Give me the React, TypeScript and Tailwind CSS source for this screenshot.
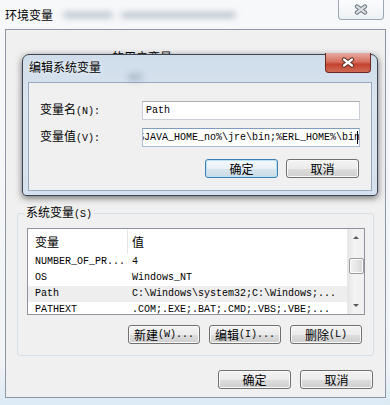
import clsx from 'clsx';

const cjk = "font-['Noto_Sans_CJK_SC',sans-serif]";
const mono = "font-['Liberation_Mono','Noto_Sans_CJK_SC',monospace]";

// ascii part of a label, in the narrow half-width look
function Key({ k }: { k: string }) {
  return <span className={clsx(mono, 'text-[10px]')}>{k}</span>;
}

interface WinButtonProps {
  children: React.ReactNode;
  wide?: boolean;
  isDefault?: boolean;
}

function WinButton({ children, wide, isDefault }: WinButtonProps) {
  return (
    <button
      className={clsx(
        'flex h-[19px] items-center justify-center rounded-[3px] border text-[12px] leading-[14px] text-black',
        wide ? 'w-[73px]' : 'w-[72px]',
        isDefault
          ? 'border-[#3c7fb1] bg-[linear-gradient(180deg,#f3f8fb_0%,#e9f1f7_50%,#d8e5ee_51%,#cbdbe6_100%)] shadow-[inset_0_0_0_1px_#b9e2f9]'
          : 'border-[#707070] bg-[linear-gradient(180deg,#f3f3f3_0%,#ebebeb_50%,#dddddd_51%,#cfcfcf_100%)] shadow-[inset_0_0_0_1px_#fafafa]'
      )}
    >
      {children}
    </button>
  );
}

function CloseGlyph({ red }: { red?: boolean }) {
  return (
    <svg width="14" height="11" viewBox="0 0 14 11">
      <path
        d="M3 2.5 L11 8.5 M11 2.5 L3 8.5"
        stroke={red ? '#5a2a24' : '#6a737d'}
        strokeWidth="4.2"
        strokeLinecap="round"
      />
      <path
        d="M3 2.5 L11 8.5 M11 2.5 L3 8.5"
        stroke={red ? '#ffffff' : '#d9dde2'}
        strokeWidth="2.2"
        strokeLinecap="round"
      />
    </svg>
  );
}

const rows = [
  { name: 'NUMBER_OF_PR...', value: '4' },
  { name: 'OS', value: 'Windows_NT' },
  { name: 'Path', value: 'C:\\Windows\\system32;C:\\Windows;...', selected: true },
  { name: 'PATHEXT', value: '.COM;.EXE;.BAT;.CMD;.VBS;.VBE;...' },
];

function VariableList() {
  return (
    <div className="flex h-[87px] w-[338px] overflow-hidden border border-[#8e949c] bg-white">
      <div className="flex-1">
        <div className="flex h-[25px] items-center text-[12px] leading-[14px] text-black">
          <div className="flex h-full w-[100px] items-center border-r border-[#e3e6ea] pl-[7px]">变量</div>
          <div className="pl-[4px]">值</div>
        </div>
        {rows.map((row) => (
          <div
            key={row.name}
            className={clsx(
              'flex h-[16px] items-center text-[10px] leading-[12px] text-black',
              mono,
              row.selected && 'bg-[#eeeeee]'
            )}
          >
            <div className="w-[100px] pl-[7px] whitespace-nowrap">{row.name}</div>
            <div className="pl-[4px] whitespace-nowrap">{row.value}</div>
          </div>
        ))}
      </div>

      {/* scrollbar */}
      <div className="flex w-[17px] flex-col border-l border-[#e8e8e8] bg-[linear-gradient(90deg,#e6e6e6,#f4f4f4_40%,#f0f0f0)]">
        <div className="flex h-[17px] items-center justify-center">
          <div className="h-0 w-0 border-x-[3px] border-b-[3px] border-x-transparent border-b-[#5a5a5a]" />
        </div>
        <div className="mx-auto mt-[12px] h-[16px] w-[15px] rounded-[2px] border border-[#9b9b9b] bg-[linear-gradient(90deg,#f2f2f2,#e6e6e6_50%,#d6d6d6)] shadow-[inset_0_0_0_1px_#fbfbfb]" />
        <div className="mt-auto flex h-[17px] items-center justify-center">
          <div className="h-0 w-0 border-x-[3px] border-t-[3px] border-x-transparent border-t-[#5a5a5a]" />
        </div>
      </div>
    </div>
  );
}

export default function App() {
  return (
    <div
      className={clsx(
        'relative h-[405px] w-[390px] overflow-hidden bg-[linear-gradient(180deg,#f7f8fa_0%,#f1f4f7_90%,#dbeaf4_100%)] text-black',
        cjk
      )}
    >
      {/* outer title bar */}
      <div className="flex h-[29px]">
        <div className="pl-[5px] pt-[8px] text-[12px] leading-[14px] [text-shadow:0_0_4px_#ffffff]">环境变量</div>
        <div className="ml-[10px] mt-[12px] flex gap-[8px]">
          <div className="h-[6px] w-[50px] rounded-full bg-[#a1acb9] opacity-70 blur-[3px]" />
          <div className="h-[6px] w-[115px] rounded-full bg-[#a1acb9] opacity-70 blur-[3px]" />
        </div>
        <div className="ml-auto mr-[6px] flex h-[20px] w-[46px] items-center justify-center rounded-b-[4px] border border-t-0 border-[#9ea8b3] bg-[linear-gradient(180deg,#fbfcfd,#eef1f4)]">
          <CloseGlyph />
        </div>
      </div>

      {/* outer client area */}
      <div className="ml-[5px] h-[369px] w-[381px] border border-[#8d98a6] bg-[#f0f0f0]">
        <div className="ml-[22px] mt-[20px] h-[14px] text-[12px] leading-[14px]">
          <Key k="Administrator " />的用户变量<Key k="(U)" />
        </div>

        <fieldset className="ml-[11px] mt-[141px] w-[357px] rounded-[3px] border border-[#d5dfe5]">
          <legend className="ml-[6px] px-[2px] text-[12px] leading-[14px]">
            系统变量<Key k="(S)" />
          </legend>
          <div className="pb-[11px] pl-[9px] pt-[6px]">
            <VariableList />
            <div className="mt-[10px] flex justify-end gap-[9px] pr-[11px]">
              <WinButton>新建<Key k="(W)..." /></WinButton>
              <WinButton>编辑<Key k="(I)..." /></WinButton>
              <WinButton>删除<Key k="(L)" /></WinButton>
            </div>
          </div>
        </fieldset>

        <div className="mt-[14px] flex justify-end gap-[9px] pr-[12px]">
          <WinButton wide>确定</WinButton>
          <WinButton wide>取消</WinButton>
        </div>
      </div>

      {/* edit dialog lying over the window */}
      <div className="absolute left-[22px] top-[54px] h-[142px] w-[356px] rounded-t-[7px] rounded-b-[4px] border border-[#3b4450] bg-[linear-gradient(180deg,#cfdcea_0%,#d9e4ef_30%,#d5e1ee_100%)] shadow-[0_2px_7px_rgba(0,0,0,0.55)]">
        <div className="relative flex h-[27px]">
          <div className="pl-[6px] pt-[5px] text-[12px] leading-[14px] [text-shadow:0_0_4px_#ffffff]">编辑系统变量</div>
          <div className="ml-[26px] mt-[18px] h-[8px] w-[16px] rounded-full bg-[#8d9db0] opacity-50 blur-[3px]" />
          <div className="absolute -top-[2px] right-[6px] flex h-[20px] w-[46px] items-center justify-center rounded-b-[4px] border border-t-0 border-[#6b2a22] bg-[linear-gradient(180deg,#e8aba3_0%,#d7705f_45%,#c4432f_60%,#cf6a55_100%)]">
            <CloseGlyph red />
          </div>
        </div>

        <div className="mx-[5px] border border-[#97a9bf] bg-[#f0f0f0] pb-[12px] pt-[18px]">
          <div className="flex items-center">
            <div className="w-[113px] pl-[11px] text-[12px] leading-[14px]">
              变量名<Key k="(N):" />
            </div>
            <div className={clsx('flex h-[19px] w-[218px] items-center border border-[#c9ced6] border-t-[#abadb3] bg-white pl-[3px] text-[10px]', mono)}>
              Path
            </div>
          </div>
          <div className="mt-[8px] flex items-center">
            <div className="w-[113px] pl-[11px] text-[12px] leading-[14px]">
              变量值<Key k="(V):" />
            </div>
            <div className={clsx('flex h-[19px] w-[218px] items-center justify-end overflow-hidden border border-[#a9bcd4] border-t-[#7f9dc2] bg-white pr-[1px] text-[10px]', mono)}>
              <span className="shrink-0 whitespace-nowrap">%JAVA_HOME_no%\jre\bin;%ERL_HOME%\bin</span>
              <span className="-ml-[3px] h-[13px] w-[1px] shrink-0 bg-black" />
            </div>
          </div>
          <div className="mt-[12px] flex justify-end gap-[8px] pr-[12px]">
            <WinButton wide isDefault>确定</WinButton>
            <WinButton wide>取消</WinButton>
          </div>
        </div>
      </div>
    </div>
  );
}
